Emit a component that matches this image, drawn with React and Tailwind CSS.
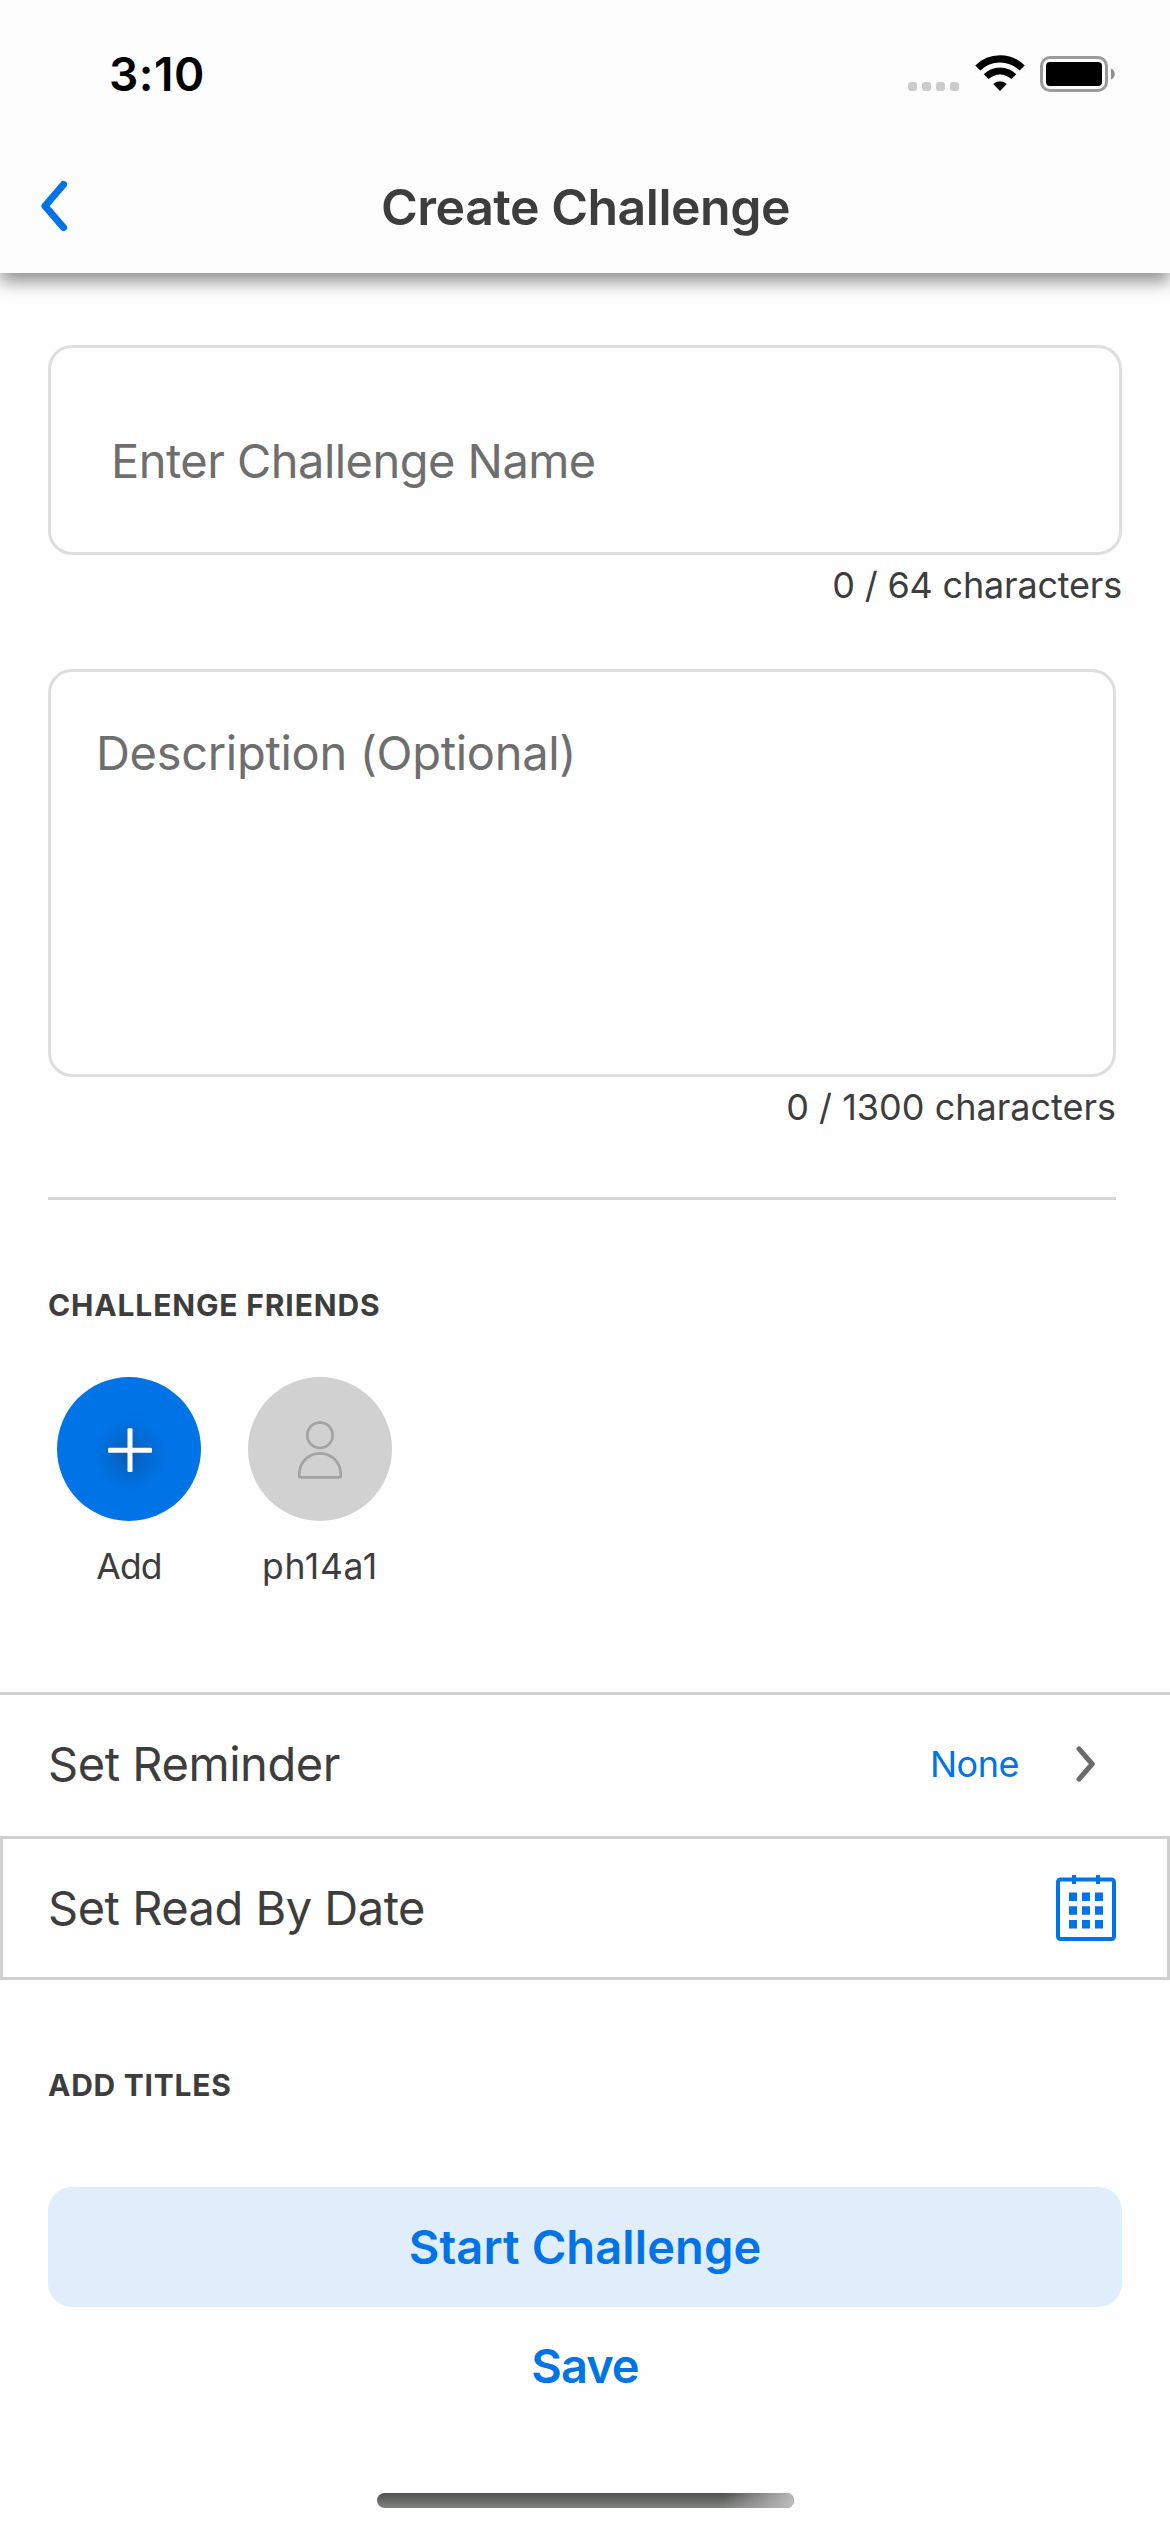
function StatusBar() {
  return (
    <div className="flex h-[148px] items-center pl-[109px] pr-[55px] text-black">
      <span className="pt-px text-[46px] font-semibold tracking-[0.5px]">3:10</span>
      <div className="ml-auto flex items-center">
        <div className="mr-[16px] mt-[25px] flex gap-[5px]">
          <span className="size-[9px] rounded-[3px] bg-[#cbcbcb]" />
          <span className="size-[9px] rounded-[3px] bg-[#cbcbcb]" />
          <span className="size-[9px] rounded-[3px] bg-[#cbcbcb]" />
          <span className="size-[9px] rounded-[3px] bg-[#cbcbcb]" />
        </div>
        <svg width="50" height="36" viewBox="0 0 50 36" className="mr-[15px] mt-[-2px]" fill="none">
          <path d="M2.8 13 A31.5 31.5 0 0 1 47.2 13" stroke="#000" strokeWidth="7.2" />
          <path d="M11.2 21.6 A19.5 19.5 0 0 1 38.8 21.6" stroke="#000" strokeWidth="7" />
          <path d="M25 36 L18.2 29 A9.8 9.8 0 0 1 31.8 29 Z" fill="#000" />
        </svg>
        <svg width="75" height="36" viewBox="0 0 75 36" fill="none">
          <rect x="1.5" y="1.5" width="65" height="33" rx="8.5" stroke="#9b9b9b" strokeWidth="3" />
          <rect x="6" y="6" width="56" height="24" rx="4" fill="#000" />
          <path d="M71 12.4 C76 14.5 76 21.5 71 23.6 Z" fill="#8f8f8f" />
        </svg>
      </div>
    </div>
  );
}

function Header() {
  return (
    <header className="h-[273px] bg-[#fdfdfd] shadow-[0_9px_16px_rgba(0,0,0,0.42)]">
      <StatusBar />
      <div className="grid h-[118px] grid-cols-[120px_1fr_120px] items-center">
        <svg width="26" height="52" viewBox="0 0 26 52" className="-mt-[2px] ml-[41px]" fill="none">
          <path d="M22.5 4.5 L4 26 L22.5 47.5" stroke="#0073e6" strokeWidth="7.2" strokeLinecap="round" strokeLinejoin="round" />
        </svg>
        <h1 className="pl-px text-center text-[50px] font-semibold tracking-[-0.5px]">Create Challenge</h1>
      </div>
    </header>
  );
}

function Friend({ name, color, tracking, children }) {
  return (
    <div className="flex w-[162px] flex-col items-center">
      <div className={`flex size-[144px] items-center justify-center rounded-full ${color}`}>{children}</div>
      <span className={`mt-[16px] text-[35.5px] leading-[60px] ${tracking}`}>{name}</span>
    </div>
  );
}

function PlusIcon() {
  return (
    <svg width="144" height="144" viewBox="0 0 144 144">
      <defs>
        <radialGradient id="plusShade">
          <stop offset="0" stopColor="#0f4a8c" stopOpacity="0.6" />
          <stop offset="0.45" stopColor="#0f4a8c" stopOpacity="0.27" />
          <stop offset="1" stopColor="#0f4a8c" stopOpacity="0" />
        </radialGradient>
      </defs>
      <circle cx="73" cy="78" r="36" fill="url(#plusShade)" />
      <rect x="51" y="70.7" width="44" height="5" rx="1.2" fill="#fdfeff" />
      <rect x="70.5" y="51.3" width="5" height="43.7" rx="1.2" fill="#fdfeff" />
    </svg>
  );
}

function PersonIcon() {
  return (
    <svg width="46" height="60" viewBox="0 0 46 60" fill="none" stroke="#a3a3a3" strokeWidth="2.7" strokeLinejoin="round">
      <circle cx="23" cy="16.3" r="12.7" />
      <path d="M23 34.3 C11.2 34.3 2.2 43.8 2.2 55.6 V56.4 Q2.2 58.3 4.2 58.3 H41.8 Q43.8 58.3 43.8 56.4 V55.6 C43.8 43.8 34.8 34.3 23 34.3 Z" />
    </svg>
  );
}

function CalendarIcon() {
  return (
    <svg width="60" height="66" viewBox="0 0 60 66" fill="#0073e6">
      <rect x="2" y="4.4" width="56" height="59.6" rx="2.5" fill="none" stroke="#0073e6" strokeWidth="4" />
      <path d="M16 0h4v9h-4z M40 0h4v9h-4z" />
      <path d="M13 17.5h8v8.5h-8z M26 17.5h8v8.5h-8z M39 17.5h8v8.5h-8z M13 31.2h8v8.5h-8z M26 31.2h8v8.5h-8z M39 31.2h8v8.5h-8z M13 45h8v8.5h-8z M26 45h8v8.5h-8z M39 45h8v8.5h-8z" />
    </svg>
  );
}

export default function App() {
  return (
    <div className="flex h-[2532px] w-[1170px] flex-col overflow-hidden bg-[#fefefe] font-['Inter',sans-serif] text-[#3d3d3d]">
      <Header />
      <main className="flex flex-col pt-[72px]">
        <section className="flex flex-col px-[48px]">
          <div className="flex h-[210px] items-center rounded-[24px] border-[3px] border-[#dedede] pl-[60px] pt-[22px] text-[47px] tracking-[-0.54px] text-[#6e6e6e]">
            <span>Enter Challenge Name</span>
          </div>
          <p className="text-right text-[36px] leading-[60px] tracking-[-0.19px]">0 / 64 characters</p>
          <div className="mr-[6px] mt-[54px] h-[408px] rounded-[24px] border-[3px] border-[#dedede] pl-[45px] pt-[51px] text-[47px] leading-[60px] tracking-[-0.31px] text-[#6e6e6e]">
            Description (Optional)
          </div>
          <p className="mr-[6px] text-right text-[36px] leading-[60px]">0 / 1300 characters</p>
          <div className="mr-[6px] mt-[60px] h-[3px] bg-[#d6d6d6]" />
          <h2 className="mt-[75px] text-[30px] font-bold leading-[60px] tracking-[0.85px]">CHALLENGE FRIENDS</h2>
          <div className="mt-[42px] flex gap-[29px]">
            <Friend name="Add" color="bg-[#0073e6]" tracking="tracking-[-0.9px]">
              <PlusIcon />
            </Friend>
            <Friend name="ph14a1" color="bg-[#d1d1d1]" tracking="tracking-[0.7px]">
              <PersonIcon />
            </Friend>
          </div>
        </section>

        <div className="mt-[95px] flex h-[144px] items-center border-t-[3px] border-[#cfcfcf] pb-[3px] pl-[48px] pr-[74px]">
          <span className="text-[47px] tracking-[-0.45px]">Set Reminder</span>
          <span className="ml-auto text-[36px] tracking-[-0.49px] text-[#0073e6]">None</span>
          <svg width="20" height="36" viewBox="0 0 20 36" className="ml-[57px]" fill="none">
            <path d="M3 2.8 L16.2 18 L3 33.2" stroke="#6b6b6b" strokeWidth="5" strokeLinecap="round" strokeLinejoin="round" />
          </svg>
        </div>
        <div className="flex h-[144px] items-center justify-between border-[3px] border-[#cfcfcf] pl-[45px] pr-[51px]">
          <span className="text-[47px] tracking-[-0.5px]">Set Read By Date</span>
          <CalendarIcon />
        </div>

        <section className="flex flex-col px-[48px]">
          <h2 className="mt-[75px] text-[30px] font-bold leading-[60px] tracking-[0.75px]">ADD TITLES</h2>
          <button className="mt-[72px] h-[120px] rounded-[24px] bg-[#e0edfb] text-[47px] font-semibold tracking-[0.1px] text-[#0073e6]">
            Start Challenge
          </button>
          <button className="h-[117px] pt-px text-[47px] font-semibold tracking-[-1px] text-[#0073e6]">Save</button>
        </section>

        <div className="mt-[69px] h-[15px] w-[417px] self-center overflow-hidden rounded-full bg-linear-to-b from-[#4f524f] to-[#828282]">
          <div className="ml-auto h-full w-[70px] bg-linear-[100deg] from-[#bdbdbd]/0 to-[#bdbdbd]" />
        </div>
      </main>
    </div>
  );
}
